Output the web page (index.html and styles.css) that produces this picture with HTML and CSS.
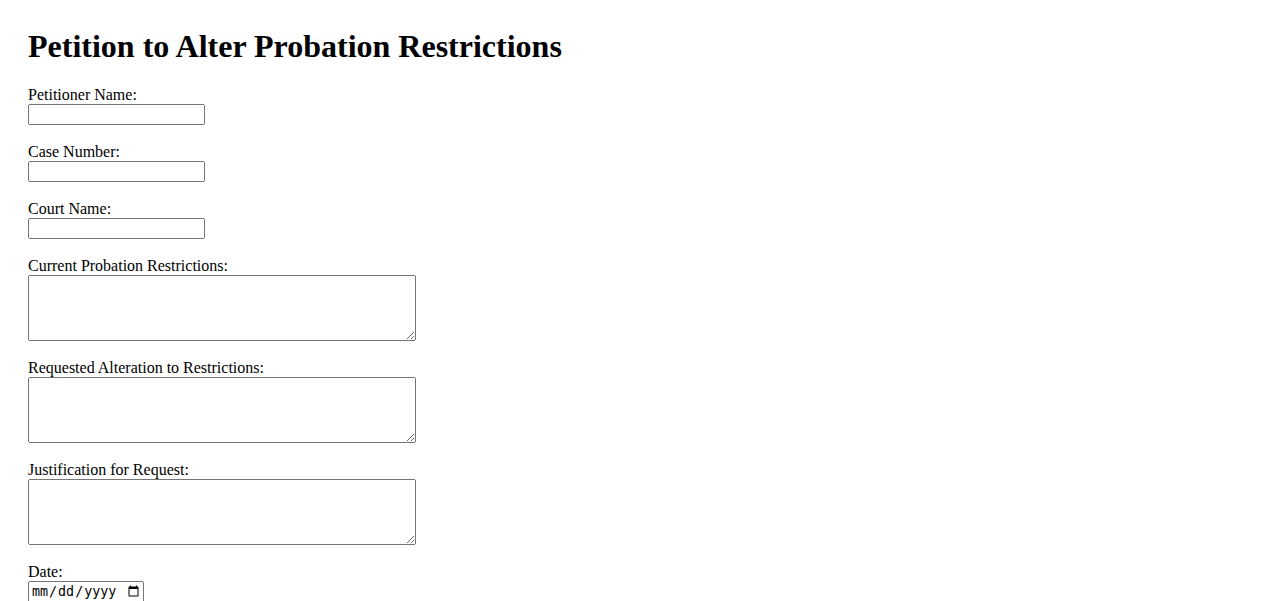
FILE: index.html
```html
<!DOCTYPE html>
<html lang="en">
<head>
<meta charset="utf-8">
<title>Petition to Alter Probation Restrictions</title>
<link rel="stylesheet" href="styles.css">
</head>
<body>
<div class="page">
  <h1 class="title">Petition to Alter Probation Restrictions</h1>
  <form class="petition">
    <div class="field">
      <label class="label" for="name">Petitioner Name:</label>
      <input class="text-input" type="text" id="name">
    </div>
    <div class="field">
      <label class="label" for="case">Case Number:</label>
      <input class="text-input" type="text" id="case">
    </div>
    <div class="field">
      <label class="label" for="court">Court Name:</label>
      <input class="text-input" type="text" id="court">
    </div>
    <div class="field">
      <label class="label" for="current">Current Probation Restrictions:</label>
      <textarea class="area" id="current" rows="4"></textarea>
    </div>
    <div class="field">
      <label class="label" for="requested">Requested Alteration to Restrictions:</label>
      <textarea class="area" id="requested" rows="4"></textarea>
    </div>
    <div class="field">
      <label class="label" for="justification">Justification for Request:</label>
      <textarea class="area" id="justification" rows="4"></textarea>
    </div>
    <div class="field">
      <label class="label" for="date">Date:</label>
      <input class="date-input" type="date" id="date">
    </div>
  </form>
</div>
</body>
</html>
```
FILE: styles.css
```css
html, body {
  margin: 0;
  padding: 0;
  background: #fff;
}
body {
  font-family: "Liberation Serif", "Times New Roman", serif;
  font-size: 16px;
  color: #000;
}
.page {
  padding: 28px;
}
.title {
  font-size: 32px;
  font-weight: bold;
  margin: 0 0 21.44px 0;
  line-height: 36.8px;
}
.field {
  margin-bottom: 18px;
}
.label {
  display: block;
  line-height: 18px;
}
.text-input {
  display: block;
  box-sizing: border-box;
  width: 177px;
  height: 21px;
  margin: 0;
}
.area {
  display: block;
  box-sizing: border-box;
  width: 388px;
  height: 66px;
  margin: 0;
}
.date-input {
  display: block;
  box-sizing: border-box;
  width: 116px;
  height: 21px;
  margin: 0;
}
```
